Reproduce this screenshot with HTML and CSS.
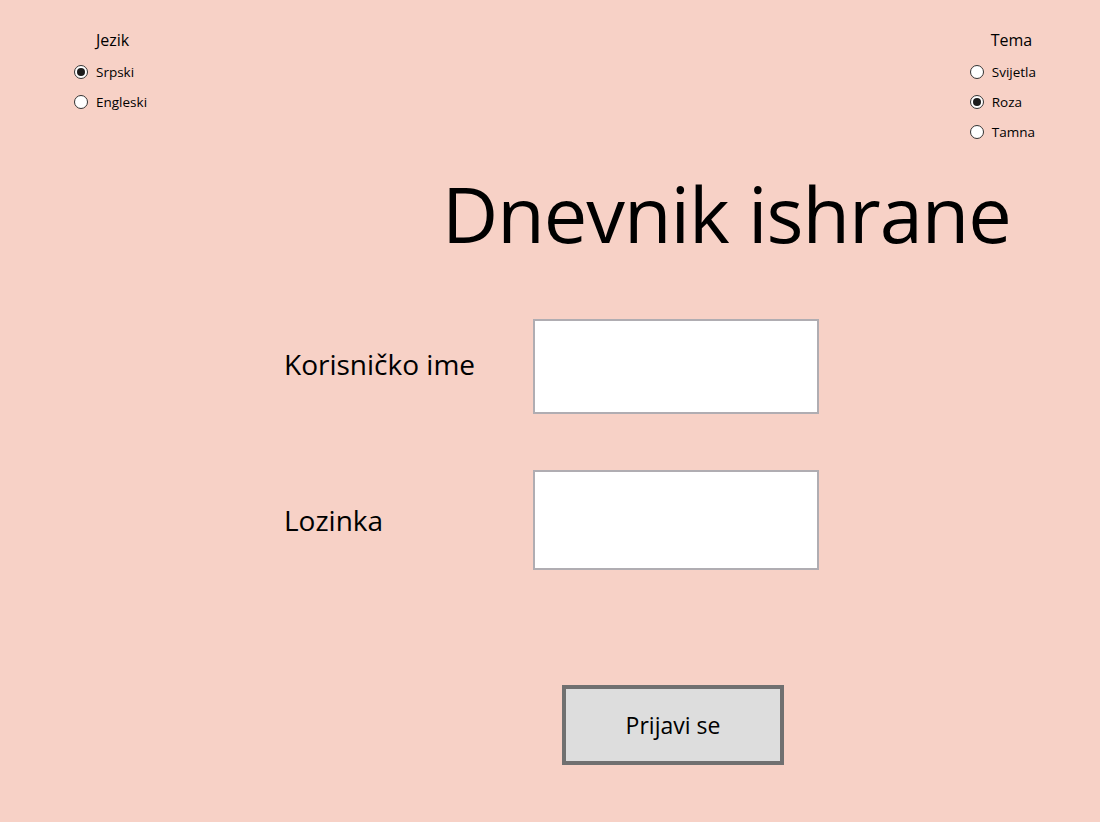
FILE: index.html
```html
<!DOCTYPE html>
<html lang="sr">
<head>
<meta charset="utf-8">
<title>Dnevnik ishrane</title>
<link rel="stylesheet" href="styles.css">
</head>
<body>
<div class="window">
  <header class="top">
    <div class="group group-lang">
      <div class="group-title">Jezik</div>
      <label class="radio"><input type="radio" name="lang" checked><span>Srpski</span></label>
      <label class="radio"><input type="radio" name="lang"><span>Engleski</span></label>
    </div>
    <div class="group group-theme">
      <div class="group-title">Tema</div>
      <label class="radio"><input type="radio" name="theme"><span>Svijetla</span></label>
      <label class="radio"><input type="radio" name="theme" checked><span>Roza</span></label>
      <label class="radio"><input type="radio" name="theme"><span>Tamna</span></label>
    </div>
  </header>
  <h1 class="title">Dnevnik ishrane</h1>
  <form class="form">
    <label class="field-label" for="user">Korisničko ime</label>
    <input class="field field-user" id="user" type="text">
    <label class="field-label label-pass" for="pass">Lozinka</label>
    <input class="field field-pass" id="pass" type="password">
    <div class="actions">
      <button type="button" class="btn">Prijavi se</button>
    </div>
  </form>
</div>
</body>
</html>
```

FILE: styles.css
```css
html, body {
  margin: 0;
  padding: 0;
}
body {
  background: #f7d1c6;
  font-family: "Open Sans", "Noto Sans", sans-serif;
  color: #000;
}
.window {
  width: 1100px;
  height: 822px;
  overflow: hidden;
}
.top {
  display: flex;
  justify-content: space-between;
  align-items: flex-start;
  padding: 30px 64px 0 74px;
  height: 118px;
  box-sizing: border-box;
}
.group {
  display: flex;
  flex-direction: column;
  flex-shrink: 0;
}
.group-title {
  font-size: 16px;
  line-height: 20px;
  height: 27px;
  flex-shrink: 0;
}
.group-lang .group-title { padding-left: 22px; }
.group-theme .group-title { padding-left: 21px; }
.radio {
  display: flex;
  align-items: center;
  height: 30px;
  flex-shrink: 0;
  font-size: 13.5px;
  gap: 8px;
}
.radio input {
  appearance: none;
  -webkit-appearance: none;
  margin: 0;
  width: 14px;
  height: 14px;
  border-radius: 50%;
  border: 1px solid #333;
  background: #fff;
  box-sizing: border-box;
  display: grid;
  place-items: center;
}
.radio input:checked::after {
  content: "";
  width: 8px;
  height: 8px;
  border-radius: 50%;
  background: #1c1c1c;
}
.title {
  margin: 40px 0 0 442px;
  font-weight: 400;
  font-size: 77.5px;
  line-height: 110px;
  height: 120px;
  letter-spacing: -1px;
  white-space: nowrap;
}
.form {
  display: grid;
  grid-template-columns: 250px 286px;
  grid-template-rows: 95px 56px 100px;
  padding-left: 283px;
  align-items: center;
  margin-top: 41px;
}
.field-label {
  font-size: 28px;
  line-height: 36px;
  white-space: nowrap;
  padding-left: 1px;
}
.field-label:first-child { margin-top: -6px; }
.field-user { grid-row: 1; grid-column: 2; }
.label-pass { grid-row: 3; grid-column: 1; }
.field-pass { grid-row: 3; grid-column: 2; }
.field {
  width: 286px;
  height: 100%;
  box-sizing: border-box;
  border: 2px solid #b0adb2;
  background: #fff;
  margin: 0;
  padding: 0;
}
.actions {
  grid-row: 4;
  grid-column: 1 / span 2;
  padding: 115px 0 0 279px;
}
.btn {
  width: 222px;
  height: 80px;
  box-sizing: border-box;
  border: 4px solid #707070;
  background: #dddddd;
  font-family: inherit;
  font-size: 23px;
  color: #000;
  padding: 0;
}
```
